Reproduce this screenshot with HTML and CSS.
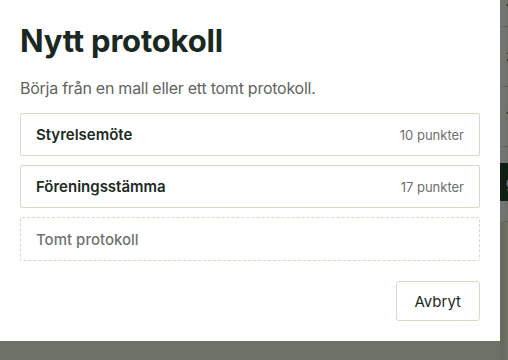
FILE: index.html
```html
<!DOCTYPE html>
<html lang="sv">
<head>
  <meta charset="UTF-8" />
  <title>Nytt protokoll</title>
  <meta name="viewport" content="width=device-width, initial-scale=1.0"/>
  <link rel="stylesheet" href="styles.css">
</head>
<body>

  <!-- Page behind the dialog -->
  <div class="page">
    <div class="page-main"></div>
    <div class="page-table">
      <div class="row row-head">3</div>
      <div class="row row-tall">3-</div>
      <div class="row row-tall">1</div>
      <div class="row row-short"></div>
      <div class="row row-active">g</div>
      <div class="row row-mid"></div>
      <div class="row row-rest"></div>
    </div>
  </div>

  <div class="overlay"></div>

  <div class="modal">
    <h1 class="modal-title">Nytt protokoll</h1>
    <p class="modal-desc">Börja från en mall eller ett tomt protokoll.</p>

    <div class="template-list">
      <button class="template">
        <span class="template-name">Styrelsemöte</span>
        <span class="template-count">10 punkter</span>
      </button>
      <button class="template">
        <span class="template-name">Föreningsstämma</span>
        <span class="template-count">17 punkter</span>
      </button>
      <button class="template template-empty">
        <span class="template-name">Tomt protokoll</span>
      </button>
    </div>

    <div class="modal-actions">
      <button class="cancel-btn">Avbryt</button>
    </div>
  </div>

</body>
</html>
```

FILE: styles.css
```css
* {
  box-sizing: border-box;
}
body {
  margin: 0;
  padding: 0;
  font-family: Inter, 'Noto Sans', sans-serif;
  color: #1c2a24;
  background: #f4f2ec;
  height: 360px;
  overflow: hidden;
}
.page {
  display: flex;
  height: 360px;
}
.page-main {
  width: 500px;
  flex-shrink: 0;
  background: #f4f2ec;
}
.page-table {
  flex: 1;
  background: #f4f2ec;
  font-size: 15px;
  color: #1c2a24;
}
.row {
  border-bottom: 1px solid #c9c6bc;
  border-left: 5px solid #fff;
  background: #f6f4ef;
  display: flex;
  align-items: center;
  padding-left: 1px;
}
.row-head {
  align-items: flex-start;
  margin-top: -8px;
  height: 35px;
}
.row-tall {
  height: 60px;
}
.row-short {
  height: 16px;
  border-bottom: none;
}
.row-active {
  height: 38px;
  background: #0f2219;
  border-left-color: #0f2219;
  color: #fff;
  font-weight: 600;
  border-bottom: none;
}
.row-mid {
  height: 21px;
}
.row-rest {
  height: 140px;
  border-bottom: none;
  border-left-color: #e6e0d2;
  background: #f4f2ec;
}
.overlay {
  position: fixed;
  inset: 0;
  background: rgba(20, 26, 16, 0.6);
}
.modal {
  position: fixed;
  top: 0;
  left: 0;
  width: 500px;
  height: 341px;
  background: #fff;
  padding: 23px 20px 20px;
}
.modal-title {
  margin: 0;
  font-size: 31px;
  line-height: 36px;
  font-weight: 700;
  letter-spacing: -0.2px;
  color: #1a2822;
}
.modal-desc {
  margin: 17px 0 13px;
  font-size: 16px;
  line-height: 24px;
  letter-spacing: -0.25px;
  color: #5f655f;
}
.template-list {
  display: flex;
  flex-direction: column;
  gap: 9px;
}
.template {
  display: flex;
  justify-content: space-between;
  align-items: center;
  width: 100%;
  height: 43px;
  padding: 0 15px;
  background: #fff;
  border: 1px solid #ddd6c4;
  border-radius: 2px;
  font-family: inherit;
  cursor: pointer;
  text-align: left;
}
.template-name {
  font-size: 15px;
  font-weight: 600;
  color: #1c2a24;
}
.template-count {
  font-size: 13px;
  color: #6c706b;
}
.template-empty {
  border: 1px dashed #ddd6c4;
  height: 44px;
}
.template-empty .template-name {
  font-weight: 500;
  color: #6f746f;
}
.modal-actions {
  display: flex;
  justify-content: flex-end;
  margin-top: 20px;
}
.cancel-btn {
  height: 40px;
  padding: 0 18px;
  background: #fff;
  border: 1px solid #ddd6c4;
  border-radius: 3px;
  font-family: inherit;
  font-size: 15px;
  color: #1c2a24;
  cursor: pointer;
}
```
